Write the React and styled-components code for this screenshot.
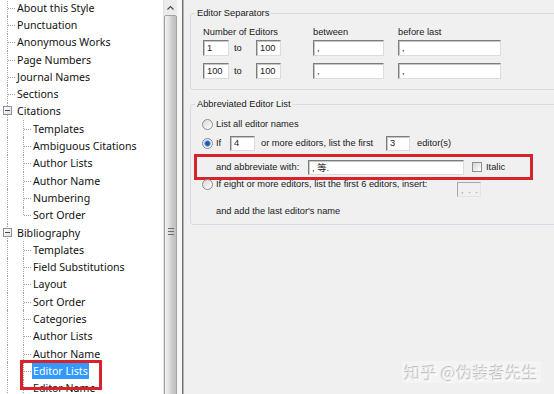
import React from 'react';
import styled, { createGlobalStyle } from 'styled-components';

const GlobalStyle = createGlobalStyle`
  html, body {
    margin: 0;
    padding: 0;
    overflow: hidden;
    background: #f0f0f0;
  }
`;

// Style editor tree, exactly as it shows in the left pane
const treeItems = [
  { label: 'About this Style' },
  { label: 'Punctuation' },
  { label: 'Anonymous Works' },
  { label: 'Page Numbers' },
  { label: 'Journal Names' },
  { label: 'Sections' },
  { label: 'Citations', expander: true },
  { label: 'Templates', depth: 1 },
  { label: 'Ambiguous Citations', depth: 1 },
  { label: 'Author Lists', depth: 1 },
  { label: 'Author Name', depth: 1 },
  { label: 'Numbering', depth: 1 },
  { label: 'Sort Order', depth: 1, last: true },
  { label: 'Bibliography', expander: true },
  { label: 'Templates', depth: 1 },
  { label: 'Field Substitutions', depth: 1 },
  { label: 'Layout', depth: 1 },
  { label: 'Sort Order', depth: 1 },
  { label: 'Categories', depth: 1 },
  { label: 'Author Lists', depth: 1 },
  { label: 'Author Name', depth: 1 },
  { label: 'Editor Lists', depth: 1, selected: true },
  { label: 'Editor Name', depth: 1 },
];

const Window = styled.div`
  display: flex;
  width: 554px;
  height: 394px;
  overflow: hidden;
  background: #f0f0f0;
`;

const TreePanel = styled.div`
  position: relative;
  width: 163px;
  flex-shrink: 0;
  background: #fff;
  overflow: hidden;
  font-family: 'Noto Sans', 'Liberation Sans', sans-serif;
  font-size: 10.6px;
  color: #111;
`;

const TreeList = styled.ul`
  list-style: none;
  margin: -1px 0 0;
  padding: 0;
`;

const TreeRow = styled.li`
  display: flex;
  align-items: center;
  height: 17.3px;
`;

const Guide = styled.span`
  position: relative;
  width: 16px;
  height: 100%;
  flex-shrink: 0;

  &::before {
    content: '';
    position: absolute;
    left: 7px;
    top: 0;
    bottom: ${(p) => (p.$last ? '50%' : '0')};
    border-left: 1px dotted #a0a0a0;
  }

  &::after {
    content: '';
    display: ${(p) => (p.$branch ? 'block' : 'none')};
    position: absolute;
    left: 8px;
    top: 50%;
    width: 7px;
    border-top: 1px dotted #a0a0a0;
  }
`;

const Expander = styled.span`
  position: absolute;
  z-index: 1;
  left: 3px;
  top: 50%;
  width: 9px;
  height: 9px;
  margin-top: -5px;
  box-sizing: border-box;
  border: 1px solid #919191;
  background: linear-gradient(135deg, #ffffff, #e2e2e2);

  &::after {
    content: '';
    position: absolute;
    left: 1px;
    right: 1px;
    top: 3px;
    height: 1px;
    background: #3a4a66;
  }
`;

const NodeLabel = styled.span`
  padding: 1px 1px;
  line-height: 14px;
  white-space: nowrap;
  background: ${(p) => (p.$selected ? '#3399ff' : 'transparent')};
  color: ${(p) => (p.$selected ? '#fff' : 'inherit')};
`;

const Annotation = styled.div`
  position: absolute;
  left: 20px;
  top: 360px;
  width: 82px;
  height: 30px;
  box-sizing: border-box;
  border: 3px solid #d7232b;
  pointer-events: none;
`;

const ScrollBar = styled.div`
  width: 14px;
  flex-shrink: 0;
  box-sizing: border-box;
  display: flex;
  flex-direction: column;
  background: #ebebeb;
  border-left: 1px solid #e2e2e2;
  overflow: hidden;
`;

const ScrollArrow = styled.div`
  height: 15px;
  flex-shrink: 0;
  display: flex;
  align-items: center;
  justify-content: center;
`;

const ScrollThumb = styled.div`
  height: 432px;
  flex-shrink: 0;
  box-sizing: border-box;
  border: 1px solid #a3a3a3;
  border-radius: 2px;
  background: linear-gradient(to right, #f2f2f2, #dedede 40%, #cdcdcd 60%, #bebebe);
  display: flex;
  align-items: center;
  justify-content: center;
`;

const Splitter = styled.div`
  width: 5px;
  flex-shrink: 0;
  background: #f7f7f7;
`;

const SettingsPanel = styled.div`
  position: relative;
  flex: 1;
  min-width: 0;
  overflow: hidden;
  border-left: 1px solid #6e6e6e;
  box-shadow: inset 1px 0 0 #b4b4b4;
  padding: 7px 0 0 7px;
  font-family: 'Liberation Sans', 'Noto Sans CJK SC', sans-serif;
  font-size: 9.3px;
  color: #1a1a1a;
`;

const GroupBox = styled.fieldset`
  margin: ${(p) => p.$top || 0}px -30px 0 0;
  padding: ${(p) => p.$padTop}px 0 ${(p) => p.$padBottom}px 3px;
  border: 1px solid #d5dbe0;
  border-radius: 3px;
  min-width: 0;
`;

const GroupTitle = styled.legend`
  padding: 0 2px;
  margin-left: 1px;
  line-height: 13px;
`;

const SeparatorRow = styled.div`
  display: grid;
  grid-template-columns: 110px 85px 103px;
  align-items: center;
  margin: ${(p) => p.$top || 0}px 0 0 9px;
  height: ${(p) => p.$height}px;
`;

const ColumnHeading = styled.span`
  line-height: 12px;
`;

const NumberRange = styled.div`
  display: flex;
  align-items: center;
`;

const ToLabel = styled.span`
  width: 27px;
  box-sizing: border-box;
  padding-left: 5px;
`;

const Field = styled.input`
  width: ${(p) => p.$w}px;
  height: ${(p) => p.$h || 16}px;
  box-sizing: border-box;
  margin: 0;
  padding: 0 0 0 3px;
  border: 1px solid;
  border-color: #7c7c7c #dcdcdc #dcdcdc #7c7c7c;
  box-shadow: inset 1px 1px 0 #c6c6c6;
  background: #fff;
  font: inherit;
  color: #1a1a1a;
  outline: none;
`;

const DisabledField = styled(Field)`
  margin-top: 5px;
  background: #f0f0f0;
  border-color: #a8a8a8 #e4e4e4 #e4e4e4 #a8a8a8;
  box-shadow: none;
  color: #9a9a9a;
  letter-spacing: 1px;
`;

const OptionRow = styled.div`
  display: flex;
  align-items: ${(p) => (p.$top ? 'flex-start' : 'center')};
  height: ${(p) => p.$height || 14}px;
  margin-top: ${(p) => p.$mt || 0}px;
  line-height: 14px;
  white-space: nowrap;
`;

const Radio = styled.span`
  width: 11px;
  height: 11px;
  flex-shrink: 0;
  box-sizing: border-box;
  margin: ${(p) => (p.$alignTop ? '2px' : '0')} 3px 0 8px;
  border: 1px solid #8e8f8f;
  border-radius: 50%;
  background: ${(p) =>
    p.$checked
      ? 'radial-gradient(circle, #1d55b8 0 1.6px, #4d86d8 2.4px, #a9c7ee 3.3px, transparent 3.6px), linear-gradient(135deg, #dedede, #ffffff)'
      : 'linear-gradient(135deg, #d6d6d6, #ffffff)'};
`;

const Text = styled.span`
  width: ${(p) => (p.$w ? `${p.$w}px` : 'auto')};
  margin-left: ${(p) => p.$ml || 0}px;
  flex-shrink: 0;
`;

const HighlightRow = styled.div`
  display: flex;
  align-items: center;
  width: 339px;
  height: 26px;
  box-sizing: border-box;
  margin-top: 4px;
  margin-bottom: -3px;
  padding-left: 19px;
  border: 3px solid #d7232b;
  white-space: nowrap;
`;

const Checkbox = styled.span`
  width: 10px;
  height: 10px;
  flex-shrink: 0;
  box-sizing: border-box;
  margin: 0 4px 0 8px;
  border: 1px solid #8e8f8f;
  background: linear-gradient(135deg, #d4d4d4, #ffffff);
`;

const Watermark = styled.div`
  position: absolute;
  right: 13px;
  bottom: 11px;
  padding: 0 3px;
  font-family: 'Noto Sans CJK SC', sans-serif;
  font-size: 16px;
  line-height: 22px;
  color: #ececec;
  background: rgba(255, 255, 255, 0.25);
  text-shadow: -1px -1px 0 #c2c2c2, 1px 1px 0 #ffffff;
  letter-spacing: 0.3px;
`;

const TreeNode = ({ label, depth = 0, expander, last, selected }) => (
  <TreeRow>
    <Guide $branch={depth === 0 && !expander}>{expander && <Expander />}</Guide>
    {depth === 1 && <Guide $branch $last={last} />}
    <NodeLabel $selected={selected}>{label}</NodeLabel>
  </TreeRow>
);

const StyleTree = () => (
  <TreePanel>
    <TreeList>
      {treeItems.map((item, idx) => (
        <TreeNode key={idx} {...item} />
      ))}
    </TreeList>
    <Annotation />
  </TreePanel>
);

const TreeScroller = () => (
  <ScrollBar>
    <ScrollArrow>
      <svg width="7" height="4" viewBox="0 0 7 4">
        <path d="M0.5 3.5 L3.5 0.5 L6.5 3.5" fill="none" stroke="#4a4a4a" strokeWidth="1.2" />
      </svg>
    </ScrollArrow>
    <ScrollThumb>
      <svg width="6" height="7" viewBox="0 0 6 7">
        <path d="M0 0.5 H6 M0 3.5 H6 M0 6.5 H6" stroke="#6e6e6e" strokeWidth="1" />
      </svg>
    </ScrollThumb>
  </ScrollBar>
);

const separators = [
  { from: '1', to: '100', between: ',', beforeLast: ',', top: 2 },
  { from: '100', to: '100', between: ',', beforeLast: ',', top: 7 },
];

const EditorListSettings = () => (
  <SettingsPanel>
    <GroupBox $padTop={6} $padBottom={10}>
      <GroupTitle>Editor Separators</GroupTitle>
      <SeparatorRow $height={12}>
        <ColumnHeading>Number of Editors</ColumnHeading>
        <ColumnHeading>between</ColumnHeading>
        <ColumnHeading>before last</ColumnHeading>
      </SeparatorRow>
      {separators.map((row, idx) => (
        <SeparatorRow key={idx} $top={row.top} $height={16}>
          <NumberRange>
            <Field $w={26} defaultValue={row.from} readOnly />
            <ToLabel>to</ToLabel>
            <Field $w={25} defaultValue={row.to} readOnly />
          </NumberRange>
          <Field $w={71} defaultValue={row.between} readOnly />
          <Field $w={103} defaultValue={row.beforeLast} readOnly />
        </SeparatorRow>
      ))}
    </GroupBox>

    <GroupBox $top={8} $padTop={6} $padBottom={6}>
      <GroupTitle>Abbreviated Editor List</GroupTitle>
      <OptionRow>
        <Radio />
        <Text>List all editor names</Text>
      </OptionRow>
      <OptionRow $mt={5}>
        <Radio $checked />
        <Text $w={14}>If</Text>
        <Field $w={25} $h={15} defaultValue="4" readOnly />
        <Text $ml={6} $w={125}>or more editors, list the first</Text>
        <Field $w={24} $h={15} defaultValue="3" readOnly />
        <Text $ml={7}>editor(s)</Text>
      </OptionRow>
      <HighlightRow>
        <Text $w={92}>and abbreviate with:</Text>
        <Field $w={156} $h={15} defaultValue=", 等." readOnly />
        <Checkbox />
        <Text>Italic</Text>
      </HighlightRow>
      <OptionRow $top $height={20}>
        <Radio $alignTop />
        <Text $w={241}>If eight or more editors, list the first 6 editors, insert:</Text>
        <DisabledField $w={24} $h={15} defaultValue=", . . ." readOnly disabled />
      </OptionRow>
      <OptionRow $mt={7}>
        <Text $ml={22}>and add the last editor's name</Text>
      </OptionRow>
    </GroupBox>

    <Watermark>知乎 @伪装者先生</Watermark>
  </SettingsPanel>
);

export default function App() {
  return (
    <>
      <GlobalStyle />
      <Window>
        <StyleTree />
        <TreeScroller />
        <Splitter />
        <EditorListSettings />
      </Window>
    </>
  );
}
